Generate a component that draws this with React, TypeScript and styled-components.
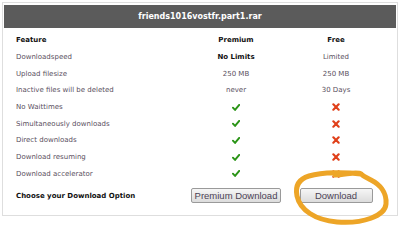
import { Fragment, ReactNode } from "react";
import styled, { createGlobalStyle } from "styled-components";

const GlobalStyle = createGlobalStyle`
  html, body {
    margin: 0;
    padding: 0;
    background: #ffffff;
  }
  body {
    font-family: Verdana, "DejaVu Sans", sans-serif;
  }
`;

const Page = styled.div`
  position: relative;
  width: 400px;
  height: 246px;
  padding: 2px;
  box-sizing: border-box;
`;

const Panel = styled.div`
  border: 1px solid #dedede;
  padding: 2px 1px 0 1px;
  height: 214px;
  box-sizing: border-box;
  background: #fff;
`;

const Header = styled.div`
  height: 23px;
  background: #5b5b5b;
  color: #fff;
  display: flex;
  align-items: center;
  justify-content: center;
  font-size: 8px;
  font-weight: bold;
`;

const Table = styled.div`
  display: grid;
  grid-template-columns: 1fr 100px 100px;
  grid-auto-rows: 16.7px;
  padding: 4px 10px 0 12px;
  align-items: center;
  font-size: 7px;
`;

const Cell = styled.div<{ $center?: boolean; $bold?: boolean; $dark?: boolean }>`
  text-align: ${(p) => (p.$center ? "center" : "left")};
  font-weight: ${(p) => (p.$bold ? "bold" : "normal")};
  color: ${(p) => (p.$dark ? "#111" : "#5a4f5e")};
  white-space: nowrap;
  display: flex;
  justify-content: ${(p) => (p.$center ? "center" : "flex-start")};
  align-items: center;
`;

const ButtonRow = styled.div`
  display: grid;
  grid-template-columns: 1fr 100px 100px;
  align-items: center;
  padding: 6px 10px 0 12px;
  font-size: 7px;
`;

const Button = styled.div<{ $width?: number }>`
  justify-self: center;
  height: 15px;
  width: ${(p) => (p.$width ? `${p.$width}px` : "auto")};
  padding: 0 3px;
  box-sizing: border-box;
  border: 1px solid #9a9a9a;
  border-radius: 2px;
  background: linear-gradient(#f6f6f6, #dcdcdc);
  color: #4b4255;
  font-family: "Liberation Sans", Arial, sans-serif;
  font-size: 9.5px;
  display: flex;
  align-items: center;
  justify-content: center;
  white-space: nowrap;
`;

const Circle = styled.svg`
  position: absolute;
  left: 285px;
  top: 160px;
  width: 110px;
  height: 70px;
  pointer-events: none;
`;

const Check = () => (
  <svg width="8" height="7" viewBox="0 0 9 8">
    <path d="M1 4.2 L3.4 6.8 L8.2 1" fill="none" stroke="#2a9416" strokeWidth="2.2" strokeLinecap="round" strokeLinejoin="round" />
  </svg>
);

const Cross = () => (
  <svg width="8" height="8" viewBox="0 0 9 9">
    <path d="M1.5 1.5 L7.5 7.5 M7.5 1.5 L1.5 7.5" fill="none" stroke="#e0401a" strokeWidth="2.4" strokeLinecap="round" />
  </svg>
);

type Row = { label: string; premium: ReactNode; free: ReactNode; bold?: boolean };

const rows: Row[] = [
  { label: "Downloadspeed", premium: "No Limits", free: "Limited", bold: true },
  { label: "Upload filesize", premium: "250 MB", free: "250 MB" },
  { label: "Inactive files will be deleted", premium: "never", free: "30 Days" },
  { label: "No Waittimes", premium: <Check />, free: <Cross /> },
  { label: "Simultaneously downloads", premium: <Check />, free: <Cross /> },
  { label: "Direct downloads", premium: <Check />, free: <Cross /> },
  { label: "Download resuming", premium: <Check />, free: <Cross /> },
  { label: "Download accelerator", premium: <Check />, free: <Cross /> },
];

export default function App() {
  return (
    <Page>
      <GlobalStyle />
      <Panel>
        <Header>friends1016vostfr.part1.rar</Header>
        <Table>
          <Cell $bold $dark>Feature</Cell>
          <Cell $center $bold $dark>Premium</Cell>
          <Cell $center $bold $dark>Free</Cell>
          {rows.map((r) => (
            <Fragment key={r.label}>
              <Cell>{r.label}</Cell>
              <Cell $center $bold={r.bold} $dark={r.bold}>{r.premium}</Cell>
              <Cell $center>{r.free}</Cell>
            </Fragment>
          ))}
        </Table>
        <ButtonRow>
          <Cell $bold $dark>Choose your Download Option</Cell>
          <Button>Premium Download</Button>
          <Button $width={73}>Download</Button>
        </ButtonRow>
      </Panel>
      <Circle viewBox="0 0 110 70">
        <path
          d="M76 14 C60 12 38 12 24 16 C14 19 10 26 12 36 C15 50 30 60 52 62 C78 64 100 56 101 44 C102 32 94 24 86 20 C82 18 79 17 76 14 C72 11 60 15 50 15"
          fill="none"
          stroke="#eda527"
          strokeWidth="5"
          strokeLinecap="round"
        />
      </Circle>
    </Page>
  );
}
